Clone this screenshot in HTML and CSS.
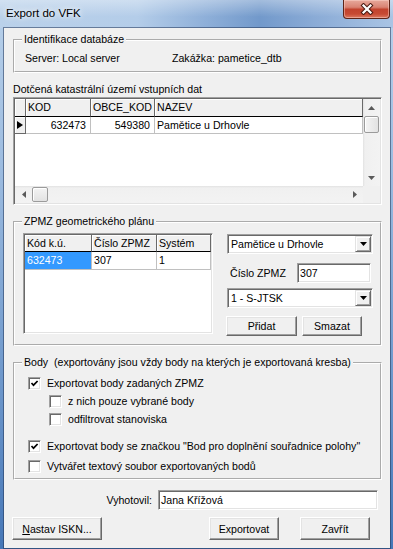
FILE: index.html
```html
<!DOCTYPE html>
<html lang="cs">

<head>
    <meta charset="UTF-8">
    <meta name="viewport" content="width=device-width, initial-scale=1.0">
    <title>Export do VFK</title>
    <link rel="stylesheet" href="styles.css">
</head>

<body>
    <div class="window">
        <div class="titlebar">
            <span class="title">Export do VFK</span>
            <div class="close-btn">
                <svg width="14" height="12" viewBox="0 0 14 12">
                    <path d="M3.5 2.5 L10.5 9.5 M10.5 2.5 L3.5 9.5" stroke="#4a1a12" stroke-width="4.2" stroke-linecap="square" />
                    <path d="M3.5 2.5 L10.5 9.5 M10.5 2.5 L3.5 9.5" stroke="#fff" stroke-width="2.2" stroke-linecap="square" />
                </svg>
            </div>
        </div>

        <div class="client">
            <fieldset class="group group-db">
                <legend>Identifikace databáze</legend>
                <div class="db-info">
                    <span class="db-server">Server: Local server</span>
                    <span>Zakážka: pametice_dtb</span>
                </div>
            </fieldset>

            <div class="label-kat">Dotčená katastrální území vstupních dat</div>
            <div class="dbgrid sunken grid-kat">
                <div class="grid-area">
                    <div class="grow head">
                        <div class="cell ind"></div>
                        <div class="cell">KOD</div>
                        <div class="cell">OBCE_KOD</div>
                        <div class="cell">NAZEV</div>
                    </div>
                    <div class="grow data">
                        <div class="cell ind"><span class="row-arrow"></span></div>
                        <div class="cell num">632473</div>
                        <div class="cell num">549380</div>
                        <div class="cell">Pamětice u Drhovle</div>
                    </div>
                </div>
                <div class="vscroll">
                    <div class="sb-btn"><svg width="7" height="4"><path d="M0 4 L3.5 0 L7 4Z" fill="#5a5a5a" /></svg></div>
                    <div class="sb-thumb v"></div>
                    <div class="sb-track"></div>
                    <div class="sb-btn"><svg width="7" height="4"><path d="M0 0 L3.5 4 L7 0Z" fill="#5a5a5a" /></svg></div>
                </div>
                <div class="hscroll">
                    <div class="sb-btn"><svg width="4" height="7"><path d="M4 0 L0 3.5 L4 7Z" fill="#5a5a5a" /></svg></div>
                    <div class="sb-thumb h"></div>
                    <div class="sb-track"></div>
                    <div class="sb-btn"><svg width="4" height="7"><path d="M0 0 L4 3.5 L0 7Z" fill="#5a5a5a" /></svg></div>
                </div>
                <div class="corner"></div>
            </div>

            <fieldset class="group group-zpmz">
                <legend>ZPMZ geometrického plánu</legend>
                <div class="zpmz-body">
                    <div class="dbgrid sunken grid-zpmz">
                        <div class="grow head">
                            <div class="cell">Kód k.ú.</div>
                            <div class="cell">Číslo ZPMZ</div>
                            <div class="cell">Systém</div>
                        </div>
                        <div class="grow data">
                            <div class="cell sel">632473</div>
                            <div class="cell">307</div>
                            <div class="cell">1</div>
                        </div>
                    </div>

                    <div class="zpmz-side">
                        <div class="combo sunken">
                            <span class="combo-text">Pamětice u Drhovle</span>
                            <span class="combo-btn"><svg width="7" height="4"><path d="M0 0 L3.5 4 L7 0Z" fill="#000" /></svg></span>
                        </div>
                        <div class="zpmz-row">
                            <span class="zpmz-label">Číslo ZPMZ</span>
                            <span class="field sunken field-zpmz">307</span>
                        </div>
                        <div class="combo sunken combo-sys">
                            <span class="combo-text">1 - S-JTSK</span>
                            <span class="combo-btn"><svg width="7" height="4"><path d="M0 0 L3.5 4 L7 0Z" fill="#000" /></svg></span>
                        </div>
                        <div class="zpmz-btns">
                            <div class="btn btn-add">Přidat</div>
                            <div class="btn btn-del">Smazat</div>
                        </div>
                    </div>
                </div>
            </fieldset>

            <fieldset class="group group-body">
                <legend>Body&nbsp; (exportovány jsou vždy body na kterých je exportovaná kresba)</legend>
                <label class="chk">
                    <span class="box sunken"><svg width="9" height="9"><path d="M1.5 4 L3.5 6.2 L7.6 2" stroke="#000" stroke-width="1.7" fill="none" /></svg></span>
                    Exportovat body zadaných ZPMZ
                </label>
                <label class="chk sub">
                    <span class="box sunken"></span>
                    z nich pouze vybrané body
                </label>
                <label class="chk sub">
                    <span class="box sunken"></span>
                    odfiltrovat stanoviska
                </label>
                <label class="chk spaced">
                    <span class="box sunken"><svg width="9" height="9"><path d="M1.5 4 L3.5 6.2 L7.6 2" stroke="#000" stroke-width="1.7" fill="none" /></svg></span>
                    Exportovat body se značkou "Bod pro doplnění souřadnice polohy"
                </label>
                <label class="chk near">
                    <span class="box sunken"></span>
                    Vytvářet textový soubor exportovaných bodů
                </label>
            </fieldset>

            <div class="author-row">
                <span>Vyhotovil:</span>
                <span class="field sunken field-author">Jana Křížová</span>
            </div>

            <div class="actions">
                <div class="btn btn-iskn"><span><u>N</u>astav ISKN...</span></div>
                <div class="btn btn-export">Exportovat</div>
                <div class="btn btn-close">Zavřít</div>
            </div>
        </div>
    </div>
</body>

</html>
```

FILE: styles.css
```css
* {
    box-sizing: border-box;
}

body {
    margin: 0;
    font-family: "Liberation Sans", Arial, sans-serif;
    font-size: 10.6px;
    color: #000;
    background: #5d88bf;
}

.window {
    width: 393px;
    height: 549px;
    display: flex;
    flex-direction: column;
    padding: 0 3px 3px 4px;
    background: linear-gradient(180deg, #b9d1ea 0%, #9dbce0 30%, #6d97cb 70%, #4677b7 100%);
}

.titlebar {
    height: 28px;
    flex: none;
    display: flex;
    align-items: flex-start;
    justify-content: space-between;
    margin: 0 -3px 0 -4px;
    padding: 0 3px 0 4px;
    background:
        linear-gradient(180deg, rgba(255, 255, 255, 0.35) 0%, rgba(255, 255, 255, 0) 60%),
        linear-gradient(90deg, #bad1ea 0%, #b4cde9 35%, #8fb0d9 52%, #7299cb 66%, #8aabd6 80%, #a9c4e4 100%);
}

.title {
    margin: 7px 0 0 2px;
    font-size: 11.5px;
    line-height: 13px;
    text-shadow: 0 0 5px #fff, 0 0 9px rgba(255, 255, 255, 0.8);
}

.close-btn {
    width: 47px;
    height: 19px;
    display: flex;
    align-items: center;
    justify-content: center;
    border: 1px solid #5e2418;
    border-top: none;
    border-radius: 0 0 4px 4px;
    background: linear-gradient(180deg, #e7a99c 0%, #d98373 40%, #c2432e 52%, #c74a33 78%, #dc7a62 100%);
    box-shadow: inset 0 0 0 1px rgba(255, 220, 210, 0.45);
}

.client {
    flex: 1;
    display: flex;
    flex-direction: column;
    padding: 5px 8px 8px 9px;
    background: #f0f0f0;
    outline: 1px solid rgba(35, 55, 90, 0.55);
}

.group {
    margin: 0;
    padding: 0 7px;
    min-width: 0;
    border: 2px groove #fff;
}

.group legend {
    padding: 0 2px;
    line-height: 13px;
}

.sunken {
    border: 1px solid;
    border-color: #a0a0a0 #fff #fff #a0a0a0;
    box-shadow: inset 1px 1px #696969, inset -1px -1px #e3e3e3;
    padding: 1px;
}

/* identifikace */
.group-db {
    padding-top: 6px;
    padding-bottom: 6px;
}

.db-info {
    display: flex;
    margin-left: 3px;
    line-height: 13px;
}

.db-server {
    width: 147px;
}

.label-kat {
    margin-top: 10px;
    line-height: 13px;
}

/* grids */
.dbgrid {
    background: #fff;
}

.grid-kat {
    margin-top: 1px;
    height: 108px;
    display: grid;
    grid-template-columns: 1fr 17px;
    grid-template-rows: 1fr 17px;
}

.grid-area {
    overflow: hidden;
    background: #fff;
}

.grow {
    display: grid;
}

.grid-kat .grow {
    grid-template-columns: 11px 65px 64px 208px;
}

.cell {
    white-space: nowrap;
    overflow: hidden;
    padding: 0 2px;
}

.head .cell {
    height: 18px;
    line-height: 17px;
    background: #f0f0f0;
    border-right: 1px solid #696969;
    border-bottom: 1px solid #000;
    box-shadow: inset 1px 1px #fff;
}

.data .cell {
    height: 17px;
    line-height: 16px;
    border-right: 1px solid #c0c0c0;
    border-bottom: 1px solid #c0c0c0;
}

.data .ind {
    display: flex;
    align-items: center;
    justify-content: center;
    padding: 0;
    background: #f0f0f0;
    border-right: 1px solid #696969;
    border-bottom: 1px solid #696969;
    box-shadow: inset 1px 1px #fff;
}

.row-arrow {
    width: 0;
    height: 0;
    border-left: 6px solid #000;
    border-top: 4px solid transparent;
    border-bottom: 4px solid transparent;
}

.num {
    text-align: right;
    padding-right: 4px;
}

.vscroll,
.hscroll {
    display: flex;
    background: #ececec;
}

.vscroll {
    flex-direction: column;
    background: linear-gradient(90deg, #e2e2e2 0, #f0f0f0 2px, #f3f3f3 100%);
}

.hscroll {
    grid-column: 1;
    background: linear-gradient(180deg, #e2e2e2 0, #f0f0f0 2px, #f3f3f3 100%);
}

.sb-btn {
    flex: none;
    width: 17px;
    height: 17px;
    display: flex;
    align-items: center;
    justify-content: center;
}

.sb-track {
    flex: 1;
}

.sb-thumb {
    flex: none;
    border: 1px solid #9b9b9b;
    border-radius: 2px;
}

.sb-thumb.v {
    height: 17px;
    margin: 0 1px;
    background: linear-gradient(90deg, #f4f4f4, #e2e2e2);
    box-shadow: inset 1px 1px #fff;
}

.sb-thumb.h {
    width: 16px;
    margin: 1px 0;
    background: linear-gradient(180deg, #f4f4f4, #e2e2e2);
    box-shadow: inset 1px 1px #fff;
}

.corner {
    background: #f0f0f0;
}

/* ZPMZ */
.group-zpmz {
    margin-top: 10px;
    padding-top: 5px;
    padding-bottom: 8px;
}

.zpmz-body {
    display: flex;
    align-items: flex-start;
}

.grid-zpmz {
    width: 190px;
    height: 101px;
    margin-left: 1px;
}

.grid-zpmz .grow {
    grid-template-columns: 67px 65px 54px;
}

.grid-zpmz .head .cell {
    height: 17px;
    line-height: 16px;
}

.grid-zpmz .data .cell {
    height: 18px;
    line-height: 17px;
}

.grid-zpmz .sel {
    background: #3399ff;
    color: #fff;
}

.zpmz-side {
    width: 146px;
    margin-left: 14px;
    padding-top: 1px;
    display: flex;
    flex-direction: column;
}

.combo {
    height: 20px;
    display: flex;
    align-items: center;
    background: #fff;
}

.combo-text {
    flex: 1;
    padding-left: 2px;
    line-height: 16px;
    white-space: nowrap;
}

.combo-btn {
    width: 16px;
    height: 16px;
    display: flex;
    align-items: center;
    justify-content: center;
    background: #f0f0f0;
    border: 1px solid;
    border-color: #e3e3e3 #696969 #696969 #e3e3e3;
    box-shadow: inset 1px 1px #fff, inset -1px -1px #a0a0a0;
}

.zpmz-row {
    margin-top: 9px;
    height: 20px;
    display: flex;
    align-items: center;
}

.zpmz-label {
    width: 67px;
    margin-left: 3px;
}

.field {
    height: 20px;
    background: #fff;
    padding: 1px 2px;
    line-height: 16px;
    white-space: nowrap;
}

.field-zpmz {
    width: 74px;
}

.combo-sys {
    margin-top: 5px;
}

.zpmz-btns {
    margin-top: 8px;
    margin-left: -1px;
    display: flex;
    gap: 5px;
}

.btn {
    height: 20px;
    display: flex;
    align-items: center;
    justify-content: center;
    background: #f0f0f0;
    border: 1px solid;
    border-color: #fff #696969 #696969 #fff;
    box-shadow: inset -1px -1px #a0a0a0, inset 1px 1px #e3e3e3;
}

.btn-add {
    width: 71px;
}

.btn-del {
    width: 60px;
}

/* Body */
.group-body {
    margin-top: 10px;
    padding-top: 5px;
    padding-bottom: 3px;
}

.chk {
    height: 18px;
    display: flex;
    align-items: center;
    margin-left: 6px;
}

.chk.sub {
    margin-left: 27px;
}

.chk.spaced {
    margin-top: 9px;
}

.chk.near {
    margin-top: 2px;
}

.box {
    flex: none;
    width: 13px;
    height: 13px;
    margin-right: 6px;
    display: flex;
    align-items: center;
    justify-content: center;
    background: #fff;
}

.author-row {
    margin-top: 10px;
    height: 20px;
    display: flex;
    align-items: center;
    justify-content: flex-end;
    padding-right: 4px;
}

.field-author {
    width: 220px;
    margin-left: 6px;
}

.actions {
    margin-top: 7px;
    margin-left: -1px;
    padding-right: 12px;
    display: flex;
}

.actions .btn {
    height: 23px;
}

.btn-iskn {
    width: 90px;
}

.btn-export {
    width: 70px;
    margin-left: auto;
}

.btn-close {
    width: 70px;
    margin-left: 21px;
}
```
